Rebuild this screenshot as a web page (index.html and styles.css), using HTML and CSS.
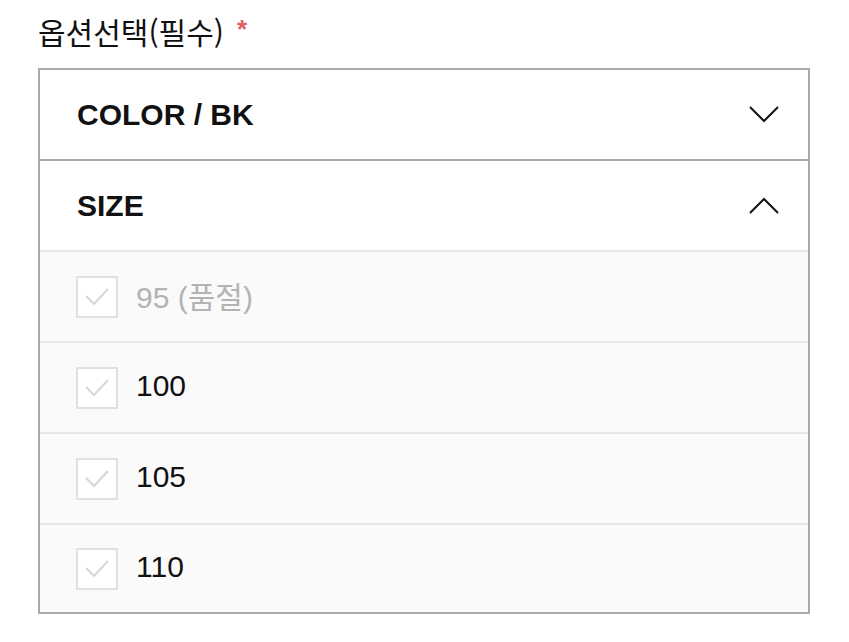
FILE: index.html
```html
<!DOCTYPE html>
<html lang="ko">
<head>
<meta charset="utf-8">
<link rel="stylesheet" href="styles.css">
</head>
<body>
<div class="wrap">
  <div class="label">옵션선택(필수)<span class="req">*</span></div>
  <div class="box">
    <div class="head">
      <span class="head-text">COLOR / BK</span>
      <svg class="chev" width="30" height="17" viewBox="0 0 30 17"><polyline points="1,1 15,15 29,1" fill="none" stroke="#111" stroke-width="2"/></svg>
    </div>
    <div class="head">
      <span class="head-text">SIZE</span>
      <svg class="chev" width="30" height="17" viewBox="0 0 30 17"><polyline points="1,16 15,2 29,16" fill="none" stroke="#111" stroke-width="2"/></svg>
    </div>
    <div class="opt disabled">
      <span class="cb"><svg width="26" height="20" viewBox="0 0 26 20"><polyline points="2,9 10,17 24,2" fill="none" stroke="#d6d6d6" stroke-width="2"/></svg></span>
      <span class="opt-text">95 (품절)</span>
    </div>
    <div class="opt">
      <span class="cb"><svg width="26" height="20" viewBox="0 0 26 20"><polyline points="2,9 10,17 24,2" fill="none" stroke="#d6d6d6" stroke-width="2"/></svg></span>
      <span class="opt-text">100</span>
    </div>
    <div class="opt">
      <span class="cb"><svg width="26" height="20" viewBox="0 0 26 20"><polyline points="2,9 10,17 24,2" fill="none" stroke="#d6d6d6" stroke-width="2"/></svg></span>
      <span class="opt-text">105</span>
    </div>
    <div class="opt">
      <span class="cb"><svg width="26" height="20" viewBox="0 0 26 20"><polyline points="2,9 10,17 24,2" fill="none" stroke="#d6d6d6" stroke-width="2"/></svg></span>
      <span class="opt-text">110</span>
    </div>
  </div>
</div>
</body>
</html>
```

FILE: styles.css
```css
html, body {
  margin: 0;
  padding: 0;
  background: #ffffff;
}
body {
  font-family: "Liberation Sans", "Noto Sans CJK KR", Arial, sans-serif;
  color: #111111;
}
.wrap {
  padding: 10px 39px 0 38px;
}
.label {
  font-family: "Noto Sans CJK KR", sans-serif;
  font-size: 30px;
  line-height: 42px;
  height: 42px;
  margin-bottom: 16px;
  color: #111;
}
.req {
  color: #e06060;
  font-family: "Liberation Sans", sans-serif;
  font-weight: bold;
  font-size: 26px;
  vertical-align: top;
  margin-left: 13px;
  position: relative;
  top: -2px;
}
.box {
  border: 2px solid #aaaaaa;
  display: flex;
  flex-direction: column;
}
.head {
  height: 89px;
  display: flex;
  align-items: center;
  justify-content: space-between;
  padding: 0 29px 0 37px;
  border-bottom: 2px solid #aaaaaa;
  background: #fff;
}
.head + .head {
  border-bottom: 2px solid #e6e6e6;
}
.head-text {
  font-weight: bold;
  font-size: 30px;
}
.chev {
  display: block;
}
.opt {
  height: 89px;
  display: flex;
  align-items: center;
  gap: 18px;
  padding: 0 0 0 36px;
  background: #fafafa;
  border-bottom: 2px solid #e6e6e6;
}
.opt:last-child {
  border-bottom: none;
  height: 87px;
}
.cb {
  width: 38px;
  height: 38px;
  border: 2px solid #e0e0e0;
  background: #fff;
  display: flex;
  align-items: center;
  justify-content: center;
  border-radius: 1px;
}
.cb svg {
  display: block;
}
.opt-text {
  font-size: 30px;
  font-family: "Liberation Sans", "Noto Sans CJK KR", sans-serif;
  position: relative;
  top: -2px;
}
.disabled .opt-text {
  color: #b3b3b3;
}
```
